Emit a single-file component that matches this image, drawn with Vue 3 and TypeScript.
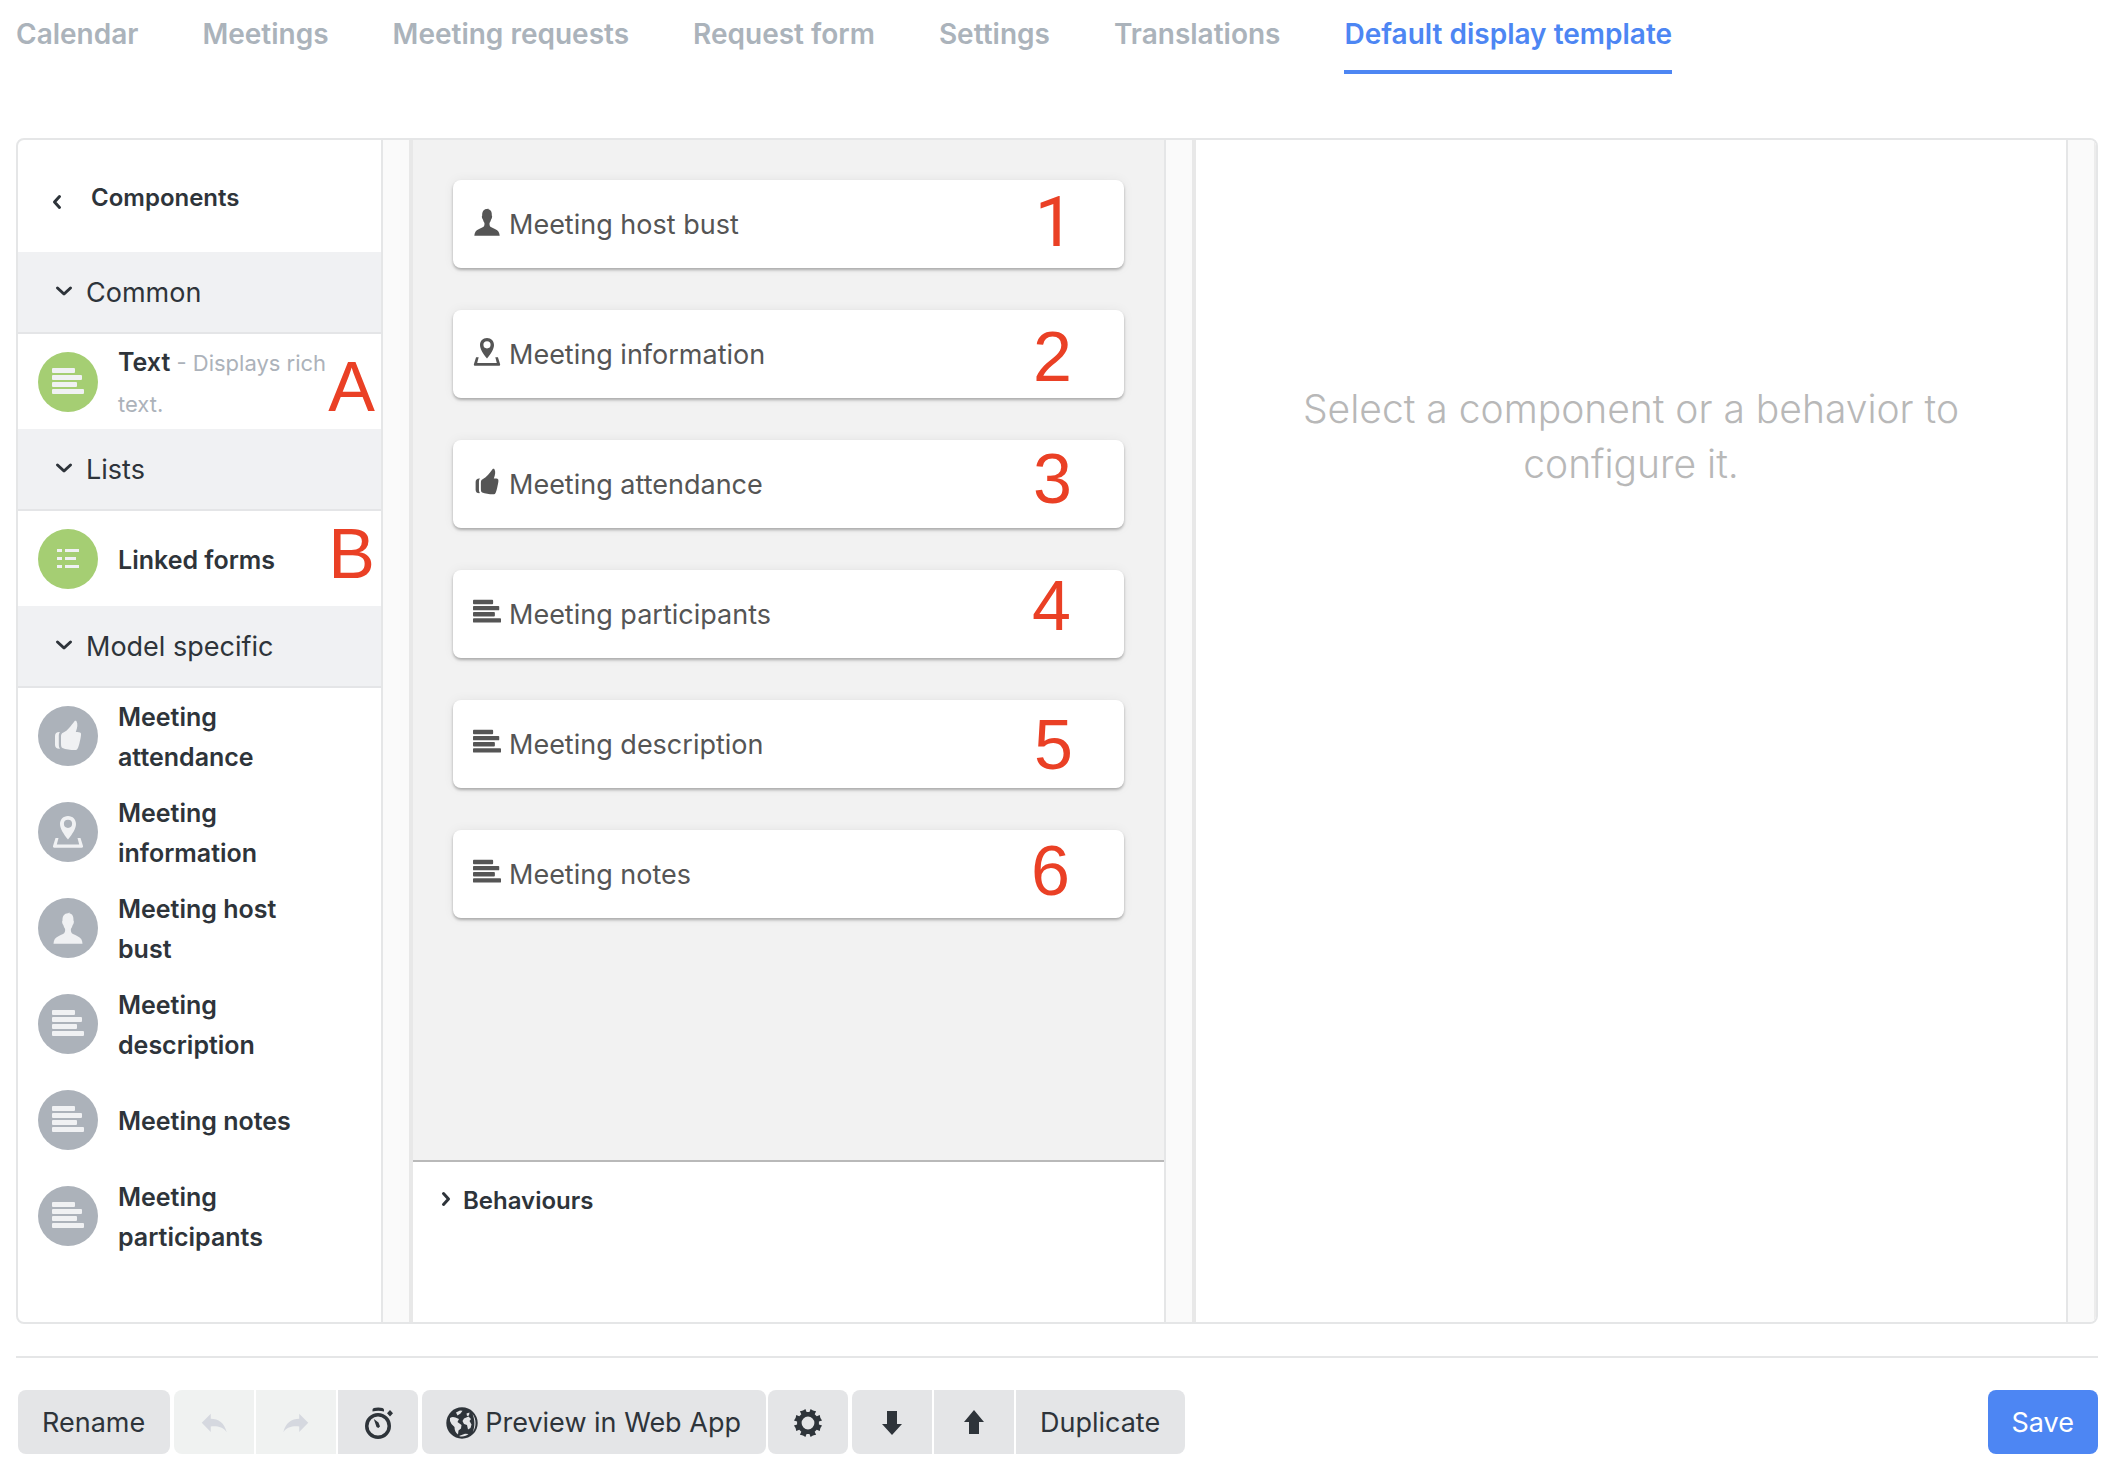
<script setup lang="ts">
import { ref } from 'vue'

interface Entry {
  label: string
  icon: string
  hint?: string
  mark?: string
  markTop?: number
  markRight?: number
}

interface Group {
  title: string
  tone: string
  entries: Entry[]
}

const disc = (x: number, y: number, r: number): string =>
  `M${x - r} ${y}a${r} ${r} 0 1 0 ${2 * r} 0a${r} ${r} 0 1 0 ${-2 * r} 0z`

function gear(): string {
  const points: string[] = []
  for (let i = 0; i < 8; i++) {
    const mid = 22.5 + i * 45
    const corners: [number, number][] = [[-15, 11], [-12, 14.3], [-3, 13.5], [3, 13.5], [12, 14.3], [15, 11]]
    for (const [offset, radius] of corners) {
      const angle = ((mid + offset) * Math.PI) / 180
      points.push(`${(16 + radius * Math.cos(angle)).toFixed(2)} ${(16 + radius * Math.sin(angle)).toFixed(2)}`)
    }
  }
  return `M${points.join('L')}z${disc(16, 16, 6.4)}`
}

const icons: Record<string, string> = {
  lines:
    'M1 2h21a1 1 0 0 1 1 1v3a1 1 0 0 1-1 1h-21a1 1 0 0 1-1-1v-3a1 1 0 0 1 1-1zM1 9h28a1 1 0 0 1 1 1v3a1 1 0 0 1-1 1h-28a1 1 0 0 1-1-1v-3a1 1 0 0 1 1-1zM1 16h23a1 1 0 0 1 1 1v3a1 1 0 0 1-1 1h-23a1 1 0 0 1-1-1v-3a1 1 0 0 1 1-1zM1 23h30a1 1 0 0 1 1 1v3a1 1 0 0 1-1 1h-30a1 1 0 0 1-1-1v-3a1 1 0 0 1 1-1z',
  list: 'M5 6h5v3h-5zM13 6h14v3h-14zM5 14h5v3h-5zM13 14h11v3h-11zM5 22h5v3h-5zM13 22h14v3h-14z',
  bust:
    'M17.500 .3C17 .8 16.800 1 16.300 1.200C12.500 1 10.300 4 10.500 8.500C9.700 9 10.200 12 11.300 13C11.800 14.700 12.300 16 13.100 17C13.300 19.500 12.800 21 11 22C8 23.600 4.500 24.500 2.800 27C2 28.500 1.600 30 1.500 31.700H30.500C30.400 30 30 28.500 29.200 27C27.500 24.500 24 23.600 21 22C19.200 21 18.700 19.500 18.900 17C19.700 16 20.200 14.700 20.700 13C21.800 12 22.300 9 21.500 8.500C21.700 4.500 20.500 1.800 17.700 1.400C17.300 1.200 17.300 .8 17.500 .3z',
  pin:
    'M16 0C11.200 0 8 3.600 8 8C8 12.500 11.500 18 16 23.500C20.500 18 24 12.500 24 8C24 3.600 20.800 0 16 0zM16 3.700a4.100 4.100 0 0 1 0 8.200a4.100 4.100 0 0 1 0-8.200zM3.500 22H6.500L4.800 28.500H27.200L25.500 22H28.500L31 30C31.200 31 30.700 31.700 29.700 31.700H2.300C1.300 31.700 .8 31 1 30z',
  thumb:
    'M22.500 1.200C23 .7 24 .7 24.500 1.300C26 4 25.500 7.500 23.800 12C25.800 12 28 12 28.800 13C29.500 14.500 28.500 19 27.500 23C26.500 27 25.500 30 24 30C20 30.200 14 29.500 10.500 28C9.300 27.400 9 26 9 23V17C9 14.500 9.500 13.400 11 12.800C16 10.500 19 5.500 22.500 1.200zM8 12C5 11.700 3 13 3 16V25C3 27.500 5 29 8 28.700C7 27.500 6.800 26 6.800 24V16.500C6.800 14.500 7 13 8 12z',
  undo: 'M2 15.700L12.300 5.500V11C21 11 28 15.500 30.500 26.500C26 20.500 20 19.300 12.300 20V26.300z',
  redo: 'M30 15.700L19.700 5.500V11C11 11 4 15.500 1.500 26.500C6 20.500 12 19.300 19.700 20V26.300z',
  timer: `${disc(16, 19, 13)}${disc(16, 19, 9.5)}M10.500 4.500V2.800C10.500 1.200 12.500 .5 16.200 .5S22 1.200 22 2.800V4.500C18 3.500 14.500 3.500 10.500 4.500zM28 3L31 6.200L28 9.500L25 6.200zM11.800 12L16.500 15.500L18 19.500L16.300 21L14.500 20z`,
  globe: `${disc(16, 16, 15.7)}M4 11C6 9.500 8 10 9.500 10.500L13 12L11.500 15L15.500 18L15 21.500L12.500 23.500L12 27.500C9.500 25.500 8.500 23 8.500 20L5.500 17L4 14zM10 5.500L14 3.500L16.500 3.800L14.500 6.500L11.500 8.500zM20.500 6.500L23.500 5.500L23 8.500L21 9zM18 11.500L22.500 9.500L25 12L23.500 14L25.500 17.500L24.500 21L22 22.500L21 18L18 17L16.500 14zM13 29L19 26.800L22.500 27C20.500 29 16.500 30.300 13 29zM26.500 7C30.500 12 30.500 20 26.800 25C29 19.500 29 13 26.500 7z`,
  gear: gear(),
  down: 'M11 4H21V17H26L16 28L6 17H11z',
  up: 'M11 27H21V15H26L16 3L6 15H11z',
  chevronLeft: 'M10.500 3.500L5.500 9L10.500 14.500',
  chevronRight: 'M6.500 3.500L11.500 9L6.500 14.500',
  chevronDown: 'M2.500 6L9 12L15.500 6',
}

const tabs = ['Calendar', 'Meetings', 'Meeting requests', 'Request form', 'Settings', 'Translations', 'Default display template']
const activeTab = ref('Default display template')

const groups: Group[] = [
  { title: 'Common', tone: 'green', entries: [{ label: 'Text', hint: ' - Displays rich text.', icon: 'lines', mark: 'A', markTop: 18, markRight: 6 }] },
  { title: 'Lists', tone: 'green', entries: [{ label: 'Linked forms', icon: 'list', mark: 'B', markTop: 8, markRight: 6 }] },
  {
    title: 'Model specific',
    tone: 'grey',
    entries: [
      { label: 'Meeting attendance', icon: 'thumb' },
      { label: 'Meeting information', icon: 'pin' },
      { label: 'Meeting host bust', icon: 'bust' },
      { label: 'Meeting description', icon: 'lines' },
      { label: 'Meeting notes', icon: 'lines' },
      { label: 'Meeting participants', icon: 'lines' },
    ],
  },
]

const cards: Entry[] = [
  { label: 'Meeting host bust', icon: 'bust', mark: '1', markTop: 7, markRight: 50 },
  { label: 'Meeting information', icon: 'pin', mark: '2', markTop: 12, markRight: 52 },
  { label: 'Meeting attendance', icon: 'thumb', mark: '3', markTop: 4, markRight: 52 },
  { label: 'Meeting participants', icon: 'lines', mark: '4', markTop: 1, markRight: 53 },
  { label: 'Meeting description', icon: 'lines', mark: '5', markTop: 10, markRight: 51 },
  { label: 'Meeting notes', icon: 'lines', mark: '6', markTop: 6, markRight: 54 },
]

const markPlace = (entry: Entry) => ({ top: `${entry.markTop}px`, right: `${entry.markRight}px` })
</script>

<template>
  <div class="page">
    <nav class="tabs">
      <a v-for="tab in tabs" :key="tab" href="#" class="tab" :class="{ active: tab === activeTab }" @click.prevent="activeTab = tab">{{ tab }}</a>
    </nav>

    <main class="editor">
      <section class="pane palette">
        <div class="pane-body">
          <button type="button" class="palette-head">
            <svg class="chevron" viewBox="0 0 18 18"><path :d="icons.chevronLeft" /></svg>
            <span>Components</span>
          </button>
          <div v-for="group in groups" :key="group.title">
            <button type="button" class="group-head">
              <svg class="chevron" viewBox="0 0 18 18"><path :d="icons.chevronDown" /></svg>
              <span>{{ group.title }}</span>
            </button>
            <ul class="entries">
              <li v-for="entry in group.entries" :key="entry.label" class="entry">
                <span class="badge" :class="group.tone">
                  <svg class="glyph" viewBox="0 0 32 32"><path fill-rule="evenodd" :d="icons[entry.icon]" /></svg>
                </span>
                <span class="entry-text"><strong>{{ entry.label }}</strong><small v-if="entry.hint">{{ entry.hint }}</small></span>
                <span v-if="entry.mark" class="mark" :style="markPlace(entry)">{{ entry.mark }}</span>
              </li>
            </ul>
          </div>
        </div>
        <div class="gutter"></div>
      </section>

      <section class="pane">
        <div class="pane-body canvas">
          <div class="cards">
            <div v-for="card in cards" :key="card.label" class="card">
              <svg class="glyph" viewBox="0 0 32 32"><path fill-rule="evenodd" :d="icons[card.icon]" /></svg>
              <span>{{ card.label }}</span>
              <span class="mark" :class="{ footless: card.mark === '1' }" :style="markPlace(card)">{{ card.mark }}</span>
            </div>
          </div>
          <div class="behaviours">
            <button type="button" class="behaviours-head">
              <svg class="chevron" viewBox="0 0 18 18"><path :d="icons.chevronRight" /></svg>
              <span>Behaviours</span>
            </button>
          </div>
        </div>
        <div class="gutter"></div>
      </section>

      <section class="pane">
        <div class="pane-body">
          <p class="empty">Select a component or a behavior to configure it.</p>
        </div>
        <div class="gutter last"></div>
      </section>
    </main>

    <footer class="toolbar">
      <div class="group"><button type="button" class="btn">Rename</button></div>
      <div class="group">
        <button type="button" class="btn icon" disabled aria-label="Undo"><svg class="glyph" viewBox="0 0 32 32"><path :d="icons.undo" /></svg></button>
        <button type="button" class="btn icon" disabled aria-label="Redo"><svg class="glyph" viewBox="0 0 32 32"><path :d="icons.redo" /></svg></button>
        <button type="button" class="btn icon" aria-label="History"><svg class="glyph large" viewBox="0 0 32 32"><path fill-rule="evenodd" :d="icons.timer" /></svg></button>
      </div>
      <div class="group preview">
        <button type="button" class="btn"><svg class="glyph large" viewBox="0 0 32 32"><path fill-rule="evenodd" :d="icons.globe" /></svg>Preview in Web App</button>
        <button type="button" class="btn icon" aria-label="Preview settings"><svg class="glyph large" viewBox="0 0 32 32"><path fill-rule="evenodd" :d="icons.gear" /></svg></button>
      </div>
      <div class="group">
        <button type="button" class="btn icon" aria-label="Export"><svg class="glyph large" viewBox="0 0 32 32"><path :d="icons.down" /></svg></button>
        <button type="button" class="btn icon" aria-label="Import"><svg class="glyph large" viewBox="0 0 32 32"><path :d="icons.up" /></svg></button>
        <button type="button" class="btn">Duplicate</button>
      </div>
      <button type="button" class="btn save">Save</button>
    </footer>
  </div>
</template>

<style>
body {
  margin: 0;
  background: #fff;
}
</style>

<style scoped>
.page {
  box-sizing: border-box;
  padding: 14px 20px 16px 16px;
  color: #2e343a;
  font-family: Inter, 'Liberation Sans', sans-serif;
  font-size: 27px;
  line-height: 40px;
}

button {
  font: inherit;
  color: inherit;
  border: 0;
  background: none;
  text-align: left;
}

svg {
  display: block;
  flex: none;
  fill: currentColor;
}

.tabs {
  display: flex;
  gap: 64px;
  margin-bottom: 64px;
}

.tab {
  padding-bottom: 16px;
  border-bottom: 4px solid transparent;
  color: #abb3bb;
  font-size: 28px;
  font-weight: 600;
  text-decoration: none;
  white-space: nowrap;
}

.tab.active {
  color: #4d86f3;
  border-color: #4d86f3;
}

.editor {
  display: grid;
  grid-template-columns: 395fr 783fr 900fr;
  min-height: 1182px;
  border: 2px solid #e5e6e7;
  border-radius: 8px;
  overflow: hidden;
}

.pane {
  display: flex;
  min-width: 0;
}

.pane-body {
  flex: 1;
  min-width: 0;
}

.gutter {
  box-sizing: border-box;
  width: 32px;
  border-left: 2px solid #e5e6e7;
  border-right: 4px solid #e8e8e8;
  background: #fafafa;
}

.gutter.last {
  width: 30px;
  border-right: 2px solid #ececec;
}

.chevron {
  width: 18px;
  height: 18px;
  fill: none;
  stroke: currentColor;
  stroke-width: 3;
  stroke-linecap: round;
  stroke-linejoin: round;
}

.palette-head,
.behaviours-head {
  display: flex;
  align-items: center;
  font-size: 24px;
  font-weight: 600;
}

.palette-head {
  gap: 24px;
  width: 100%;
  height: 112px;
  padding: 4px 31px 0;
}

.palette-head .chevron {
  margin-top: 8px;
}

.group-head {
  display: flex;
  align-items: center;
  gap: 13px;
  width: 100%;
  height: 82px;
  padding: 2px 37px 0;
  border-bottom: 2px solid #e4e5e7;
  background: #f0f1f3;
}

.group-head .chevron,
.behaviours-head .chevron {
  margin-bottom: 4px;
}

.entries {
  margin: 0;
  padding: 0;
  list-style: none;
}

.entry {
  position: relative;
  display: flex;
  align-items: center;
  gap: 20px;
  height: 96px;
  padding: 0 50px 0 20px;
  font-size: 25px;
}

.entry:only-child {
  height: 95px;
}

.entry-text {
  padding-top: 2px;
}

.entry strong {
  font-weight: 600;
}

.entry small {
  color: #acb2ba;
  font-size: 22px;
}

.badge {
  display: flex;
  flex: none;
  align-items: center;
  justify-content: center;
  width: 60px;
  height: 60px;
  border-radius: 50%;
  color: #f0f1f3;
}

.badge.green {
  background: #a5ce73;
}

.badge.grey {
  background: #acb2ba;
}

.badge .glyph,
.glyph.large {
  width: 32px;
  height: 32px;
}

.glyph {
  width: 28px;
  height: 28px;
}

.mark {
  position: absolute;
  color: #ea4025;
  font-family: 'Liberation Sans', Arial, sans-serif;
  font-size: 70px;
  line-height: 70px;
}

.canvas {
  display: flex;
  flex-direction: column;
}

.cards {
  display: flex;
  flex: 1;
  flex-direction: column;
  gap: 42px;
  padding: 40px;
  background: #f2f2f2;
}

.card {
  position: relative;
  display: flex;
  align-items: center;
  gap: 8px;
  height: 88px;
  padding: 2px 20px 0;
  box-sizing: border-box;
  border-radius: 8px;
  background: #fff;
  box-shadow: 0 2px 3px rgba(0, 0, 0, 0.28), 0 0 12px rgba(0, 0, 0, 0.06);
  color: #555;
}

.card .glyph {
  margin-bottom: 6px;
}

.mark.footless {
  font-family: Roboto, sans-serif;
}

.behaviours {
  box-sizing: border-box;
  height: 162px;
  padding: 19px 24px;
  border-top: 2px solid #b9b9b9;
}

.behaviours-head {
  gap: 8px;
  padding: 0;
}

.empty {
  margin: 0;
  padding: 241px 80px 0;
  color: #b8b8b8;
  font-size: 39px;
  font-weight: 300;
  line-height: 55px;
  text-align: center;
}

.toolbar {
  display: flex;
  gap: 4px;
  margin-top: 32px;
  padding: 32px 0 0 2px;
  border-top: 2px solid #e5e6e7;
}

.group {
  display: flex;
  gap: 2px;
}

.btn {
  display: flex;
  align-items: center;
  justify-content: center;
  gap: 7px;
  height: 64px;
  padding: 2px 24px 0;
  background: #e4e5e7;
  white-space: nowrap;
}

.group .btn {
  padding: 2px 25px 0 24px;
}

.group .btn.icon {
  width: 80px;
  padding: 2px 0 0;
}

.btn:disabled {
  background: #f0f2f1;
  color: #d5d8df;
}

.group .btn:first-child {
  border-top-left-radius: 8px;
  border-bottom-left-radius: 8px;
}

.group .btn:last-child {
  border-top-right-radius: 8px;
  border-bottom-right-radius: 8px;
}

.preview .btn {
  border-radius: 8px;
}

.btn.save {
  margin-left: auto;
  border-radius: 8px;
  background: #4d86f3;
  color: #fff;
}
</style>
